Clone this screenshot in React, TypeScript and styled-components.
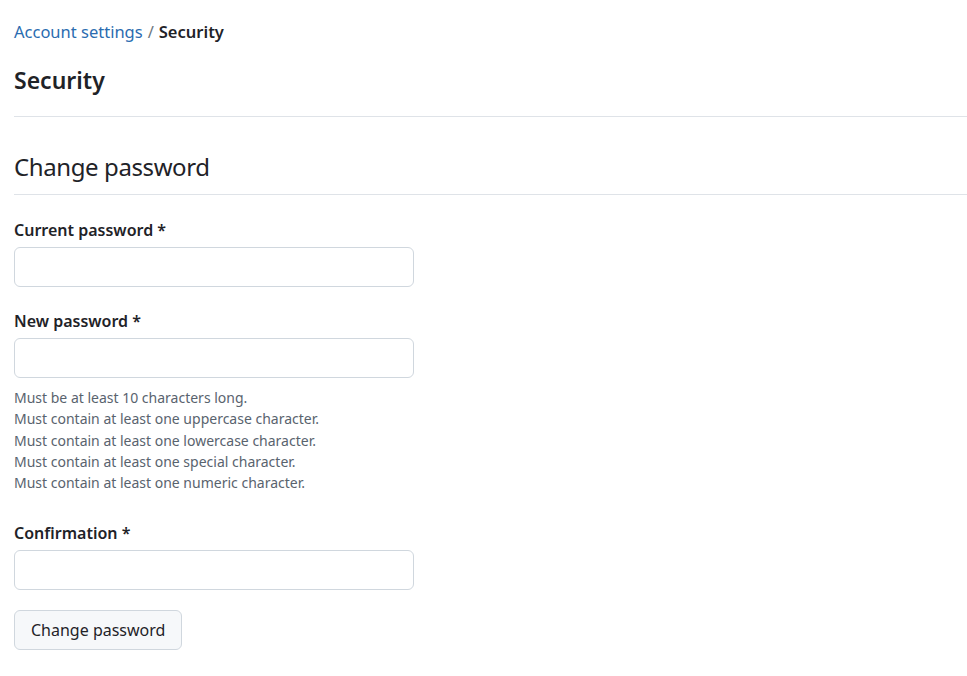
import React from 'react'
import styled, {createGlobalStyle} from "styled-components";

const GlobalStyle = createGlobalStyle`
  body {
    margin: 0;
    background: #ffffff;
    font-family: "Noto Sans", "Open Sans", sans-serif;
    color: #1f2328;
  }
`;

const rules = [
  "Must be at least 10 characters long.",
  "Must contain at least one uppercase character.",
  "Must contain at least one lowercase character.",
  "Must contain at least one special character.",
  "Must contain at least one numeric character.",
];

export default function App() {
  return (
    <Page>
      <GlobalStyle />
      <Breadcrumb>
        <a href="#">Account settings</a>
        <span className='sep'>/</span>
        <strong>Security</strong>
      </Breadcrumb>
      <Title>Security</Title>
      <Divider />
      <SubTitle>Change password</SubTitle>
      <Divider />
      <Form onSubmit={e => e.preventDefault()}>
        <Field gap={23}>
          <Label htmlFor="current">Current password *</Label>
          <Input id="current" type="password" />
        </Field>
        <Field gap={22}>
          <Label htmlFor="new">New password *</Label>
          <Input id="new" type="password" />
          <Hints>
            {rules.map(r => <li key={r}>{r}</li>)}
          </Hints>
        </Field>
        <Field gap={28}>
          <Label htmlFor="confirm">Confirmation *</Label>
          <Input id="confirm" type="password" />
        </Field>
        <Button type="submit">Change password</Button>
      </Form>
    </Page>
  )
}

const Page = styled.div`
  padding: 20px 0 0 14px;
`;

const Breadcrumb = styled.nav`
  display: flex;
  align-items: center;
  font-size: 16.5px;
  line-height: 24px;

  a {
    color: #2a6cb0;
    text-decoration: none;
  }

  .sep {
    color: #6e7781;
    margin: 0 5px;
  }

  strong {
    font-weight: 600;
    color: #1f2328;
  }
`;

const Title = styled.h1`
  margin: 20px 0 20px;
  font-size: 23px;
  line-height: 32px;
  font-weight: 600;
`;

const SubTitle = styled.h2`
  margin: 32px 0 9px;
  font-size: 24px;
  letter-spacing: -0.4px;
  line-height: 36px;
  font-weight: 400;
`;

const Divider = styled.hr`
  margin: 0;
  border: 0;
  border-top: 1px solid #dfe3e8;
`;

const Form = styled.form`
  display: flex;
  flex-direction: column;
  align-items: flex-start;
`;

const Field = styled.div<{gap: number}>`
  display: flex;
  flex-direction: column;
  margin-top: ${p => p.gap}px;
`;

const Label = styled.label`
  font-size: 16px;
  line-height: 24px;
  font-weight: 600;
  margin-bottom: 5px;
`;

const Input = styled.input`
  box-sizing: border-box;
  width: 400px;
  height: 40px;
  border: 1px solid #d0d7de;
  border-radius: 6px;
  padding: 0 12px;
  font: inherit;
  outline: none;
`;

const Hints = styled.ul`
  list-style: none;
  margin: 9px 0 0;
  padding: 0;
  font-size: 14px;
  line-height: 21.25px;
  color: #59636e;
`;

const Button = styled.button`
  margin-top: 20px;
  height: 40px;
  padding: 0 16px;
  background: #f6f8fa;
  border: 1px solid #d0d7de;
  border-radius: 6px;
  font-family: inherit;
  font-size: 16px;
  color: #1f2328;
  cursor: pointer;
`;
